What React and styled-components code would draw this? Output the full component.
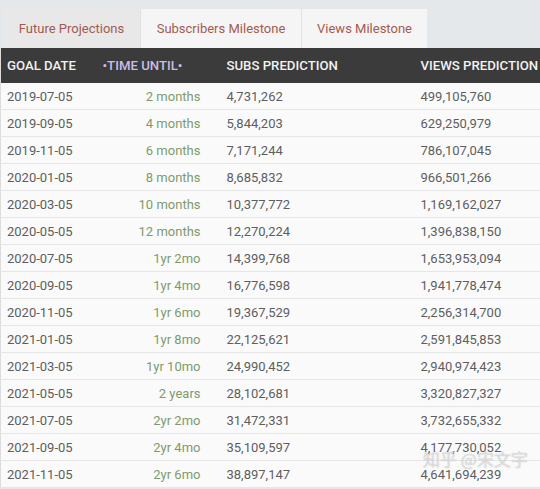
import React from 'react';
import styled, { createGlobalStyle } from 'styled-components';

const GlobalStyle = createGlobalStyle`
  html, body {
    margin: 0;
    padding: 0;
    background: #e5e8eb;
    font-family: Roboto, "Noto Sans", "Liberation Sans", sans-serif;
  }
`;

const Page = styled.div`
  position: relative;
  width: 540px;
  height: 489px;
  overflow: hidden;
  padding-top: 9px;
  box-sizing: border-box;
`;

const Tabs = styled.div`
  display: flex;
  padding-left: 3px;
  height: 39px;
`;

const Tab = styled.div`
  display: flex;
  align-items: center;
  justify-content: center;
  width: ${p => p.w}px;
  background: ${p => (p.active ? '#e8e8e8' : '#f5f5f5')};
  border-left: ${p => (p.first ? 'none' : '1px solid #e2e2e2')};
  color: #a45a50;
  font-size: 13px;
  box-sizing: border-box;
`;

const Table = styled.table`
  border-collapse: collapse;
  table-layout: fixed;
  width: 620px;
  background: #fafafa;
  border-left: 1px solid #dcdcdc;
  font-size: 13px;
`;

const HeadCell = styled.th`
  background: #3b3b3b;
  color: ${p => (p.sorted ? '#cdbde6' : '#f2f2f2')};
  font-weight: 500;
  font-size: 13.2px;
  height: 35px;
  padding: 0 6px;
  text-align: ${p => (p.right ? 'right' : 'left')};
  white-space: nowrap;
`;

const Cell = styled.td`
  height: 26px;
  padding: 0 6px;
  border-bottom: 1px solid #e6e6e6;
  color: ${p => (p.green ? '#7e9a6c' : '#5e5e5e')};
  text-align: ${p => (p.right ? 'right' : 'left')};
  white-space: nowrap;
`;

const Watermark = styled.div`
  position: absolute;
  left: 423px;
  top: 446px;
  white-space: nowrap;
  font-family: "Noto Sans CJK SC", "Noto Sans", sans-serif;
  font-size: 17px;
  color: rgba(255, 255, 255, 0.55);
  text-shadow: 0 0 1px rgba(120, 120, 120, 0.6);
  pointer-events: none;
`;

const rows = [
  ['2019-07-05', '2 months', '4,731,262', '499,105,760'],
  ['2019-09-05', '4 months', '5,844,203', '629,250,979'],
  ['2019-11-05', '6 months', '7,171,244', '786,107,045'],
  ['2020-01-05', '8 months', '8,685,832', '966,501,266'],
  ['2020-03-05', '10 months', '10,377,772', '1,169,162,027'],
  ['2020-05-05', '12 months', '12,270,224', '1,396,838,150'],
  ['2020-07-05', '1yr 2mo', '14,399,768', '1,653,953,094'],
  ['2020-09-05', '1yr 4mo', '16,776,598', '1,941,778,474'],
  ['2020-11-05', '1yr 6mo', '19,367,529', '2,256,314,700'],
  ['2021-01-05', '1yr 8mo', '22,125,621', '2,591,845,853'],
  ['2021-03-05', '1yr 10mo', '24,990,452', '2,940,974,423'],
  ['2021-05-05', '2 years', '28,102,681', '3,320,827,327'],
  ['2021-07-05', '2yr 2mo', '31,472,331', '3,732,655,332'],
  ['2021-09-05', '2yr 4mo', '35,109,597', '4,177,730,052'],
  ['2021-11-05', '2yr 6mo', '38,897,147', '4,641,694,239'],
];

export default function App() {
  return (
    <Page>
      <GlobalStyle />
      <Tabs>
        <Tab w={137} active first>Future Projections</Tab>
        <Tab w={161}>Subscribers Milestone</Tab>
        <Tab w={126}>Views Milestone</Tab>
      </Tabs>
      <Table>
        <colgroup>
          <col style={{ width: 96 }} />
          <col style={{ width: 114 }} />
          <col style={{ width: 204 }} />
          <col style={{ width: 206 }} />
        </colgroup>
        <thead>
          <tr>
            <HeadCell>GOAL DATE</HeadCell>
            <HeadCell sorted>•TIME UNTIL•</HeadCell>
            <HeadCell style={{ paddingLeft: 16 }}>SUBS PREDICTION</HeadCell>
            <HeadCell>VIEWS PREDICTION</HeadCell>
          </tr>
        </thead>
        <tbody>
          {rows.map(r => (
            <tr key={r[0]}>
              <Cell>{r[0]}</Cell>
              <Cell green right style={{ paddingRight: 10 }}>{r[1]}</Cell>
              <Cell style={{ paddingLeft: 16 }}>{r[2]}</Cell>
              <Cell>{r[3]}</Cell>
            </tr>
          ))}
        </tbody>
      </Table>
      <Watermark>知乎 @宋文宇</Watermark>
    </Page>
  );
}
